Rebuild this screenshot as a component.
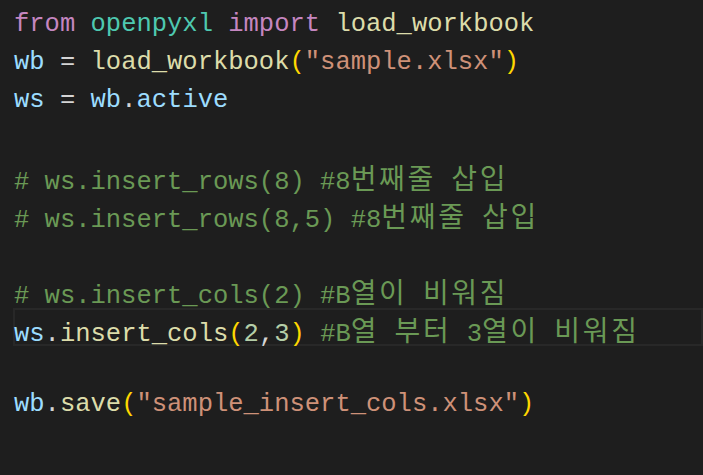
import React from "react";

const C = {
  kw: "text-[#C586C0]",
  mod: "text-[#4EC9B0]",
  fn: "text-[#DCDCAA]",
  v: "text-[#9CDCFE]",
  s: "text-[#CE9178]",
  cm: "text-[#6A9955]",
  br: "text-[#FFD700]",
  n: "text-[#B5CEA8]",
  op: "text-[#D4D4D4]",
};

const K = ({ children }) => (
  <span
    className="text-[28px] tracking-[2.7px]"
    style={{ fontFamily: '"Noto Sans CJK KR", sans-serif' }}
  >
    {children}
  </span>
);

const T = ({ c, children }) => <span className={c}>{children}</span>;

function Line({ children, active }) {
  return (
    <div
      className={`h-[38px] leading-[38px] pt-[2px] pl-[1px] whitespace-pre ${
        active ? "shadow-[inset_0_0_0_2px_#282828]" : ""
      }`}
    >
      {children}
    </div>
  );
}

export default function App() {
  return (
    <div
      className="w-[703px] h-[475px] bg-[#1E1E1E] pl-[13px] pt-[4px] overflow-hidden text-[25.5px] text-[#D4D4D4]"
      style={{ fontFamily: '"Liberation Mono", "Noto Sans CJK KR", monospace' }}
    >
      <Line>
        <T c={C.kw}>from</T> <T c={C.mod}>openpyxl</T> <T c={C.kw}>import</T>{" "}
        <T c={C.fn}>load_workbook</T>
      </Line>
      <Line>
        <T c={C.v}>wb</T> <T c={C.op}>=</T> <T c={C.fn}>load_workbook</T>
        <T c={C.br}>(</T>
        <T c={C.s}>"sample.xlsx"</T>
        <T c={C.br}>)</T>
      </Line>
      <Line>
        <T c={C.v}>ws</T> <T c={C.op}>=</T> <T c={C.v}>wb</T>
        <T c={C.op}>.</T>
        <T c={C.v}>active</T>
      </Line>
      <Line> </Line>
      <Line>
        <T c={C.cm}>
          # ws.insert_rows(8) #8<K>번째줄</K> <K>삽입</K>
        </T>
      </Line>
      <Line>
        <T c={C.cm}>
          # ws.insert_rows(8,5) #8<K>번째줄</K> <K>삽입</K>
        </T>
      </Line>
      <Line> </Line>
      <Line>
        <T c={C.cm}>
          # ws.insert_cols(2) #B<K>열이</K> <K>비워짐</K>
        </T>
      </Line>
      <Line active>
        <T c={C.v}>ws</T>
        <T c={C.op}>.</T>
        <T c={C.fn}>insert_cols</T>
        <T c={C.br}>(</T>
        <T c={C.n}>2</T>
        <T c={C.op}>,</T>
        <T c={C.n}>3</T>
        <T c={C.br}>)</T>{" "}
        <T c={C.cm}>
          #B<K>열</K> <K>부터</K> 3<K>열이</K> <K>비워짐</K>
        </T>
      </Line>
      <Line> </Line>
      <Line>
        <T c={C.v}>wb</T>
        <T c={C.op}>.</T>
        <T c={C.fn}>save</T>
        <T c={C.br}>(</T>
        <T c={C.s}>"sample_insert_cols.xlsx"</T>
        <T c={C.br}>)</T>
      </Line>
    </div>
  );
}
